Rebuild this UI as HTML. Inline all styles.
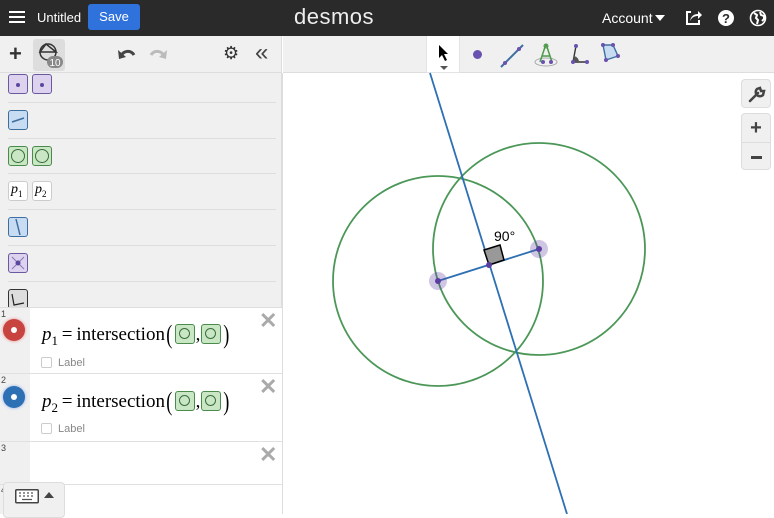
<!DOCTYPE html>
<html><head><meta charset="utf-8"><style>
*{box-sizing:border-box;margin:0;padding:0}
body{width:774px;height:514px;overflow:hidden;font-family:"Liberation Sans",sans-serif;background:#fff;position:relative}
.hdr{position:absolute;left:0;top:0;width:774px;height:36px;background:#2a2a2a;color:#fff}
.abs{position:absolute}
.tb{position:absolute;top:36px;height:37px;background:#f0f0f0;border-bottom:1px solid #ddd}
.row{position:absolute;left:8px;width:268px;border-bottom:1px solid #ddd}
.ic{position:absolute;width:20px;height:20px;border-radius:3px;border:1.5px solid}
.pur{background:#ddd3ee;border-color:#6a58a0}
.blu{background:#c7dcf2;border-color:#3d6ea0}
.grn{background:#c9e7c5;border-color:#4a8a4a}
.wht{background:#fff;border-color:#ccc;border-width:1px}
.expr{position:absolute;left:0;width:282px;background:#fff;border-bottom:1px solid #e0e0e0}
.num{position:absolute;left:1px;font-size:9px;color:#444}
.gut{position:absolute;left:0;top:0;width:30px;height:100%;background:#f0f0f0}
.math{position:absolute;left:42px;font-family:"Liberation Serif",serif;font-size:19px;color:#000;white-space:nowrap}
.mini{display:inline-block;width:20px;height:20px;border:1.5px solid #4a8a4a;background:#c9e7c5;border-radius:3px;vertical-align:-4px;position:relative;margin:0 1px}
.mini:after{content:"";position:absolute;left:3px;top:3px;width:11px;height:11px;border:1.3px solid #3b6e3b;border-radius:50%;box-sizing:border-box}
.par{font-size:26px;vertical-align:-3px;transform:scaleX(0.7);display:inline-block}
.x{position:absolute;left:259px;font-size:22px;color:#aaa;font-weight:bold}
.lbl{position:absolute;left:41px;font-size:11px;color:#888}
.lbl span{display:inline-block;width:11px;height:11px;border:1px solid #ccc;border-radius:2px;vertical-align:-2px;margin-right:6px}
</style></head><body>
<div class="hdr">
 <div class="abs" style="left:9px;top:11px;width:16px;height:2px;background:#fff;box-shadow:0 5px 0 #fff,0 10px 0 #fff"></div>
 <div class="abs" style="left:37px;top:10px;font-size:13px">Untitled</div>
 <div class="abs" style="left:88px;top:4px;width:52px;height:26px;background:#2f72dc;border-radius:3px;font-size:13px;line-height:26px;text-align:center">Save</div>
 <div class="abs" style="left:294px;top:4px;font-size:22px;letter-spacing:0.5px;color:#eee">desmos</div>
 <div class="abs" style="left:602px;top:10px;font-size:14px">Account</div>
 <div class="abs" style="left:655px;top:15px;border:5px solid transparent;border-top:6px solid #fff"></div>
 <svg class="abs" style="left:684px;top:9px" width="18" height="18"><path d="M7 3H3v12h12v-4" stroke="#fff" stroke-width="2" fill="none"/><path d="M6 12c1-5 4-7 8-7V2l4 4-4 4V7c-3 0-6 1-8 5z" fill="#fff"/></svg>
 <svg class="abs" style="left:717px;top:9px" width="18" height="18"><circle cx="9" cy="9" r="8" fill="#fff"/><text x="9" y="14" font-size="13" font-weight="bold" text-anchor="middle" fill="#2a2a2a" font-family="Liberation Sans">?</text></svg>
 <svg class="abs" style="left:749px;top:9px" width="18" height="18"><circle cx="9" cy="9" r="7.5" stroke="#fff" stroke-width="1.6" fill="none"/><path d="M5 4l3 2-1 3 2 2-1 4M11 3l1 3 3 1 0 3-2 2" stroke="#fff" stroke-width="2" fill="none"/></svg>
</div>
<div class="tb" style="left:0;width:282px;border-right:1px solid #ddd">
 <div class="abs" style="left:9px;top:8px;font-size:22px;font-weight:bold;color:#333;line-height:20px">+</div>
 <div class="abs" style="left:33px;top:3px;width:32px;height:32px;background:#ddd;border-radius:3px"></div>
 <svg class="abs" style="left:37px;top:5px" width="26" height="28"><circle cx="11" cy="11" r="8" stroke="#333" stroke-width="1.5" fill="none"/><path d="M3 11L9 3L19 11Z" stroke="#333" stroke-width="1.5" fill="none"/><rect x="10" y="15" width="16" height="12" rx="6" fill="#888"/><text x="18" y="25" font-size="10" fill="#fff" text-anchor="middle" font-family="Liberation Sans">10</text></svg>
 <svg class="abs" style="left:117px;top:10px" width="20" height="16"><path d="M4 10C7 4 14 4 17 9" stroke="#444" stroke-width="3" fill="none"/><path d="M1 4L2 13L9 11Z" fill="#444"/></svg>
 <svg class="abs" style="left:148px;top:10px" width="20" height="16"><path d="M16 10C13 4 6 4 3 9" stroke="#bbb" stroke-width="3" fill="none"/><path d="M19 4L18 13L11 11Z" fill="#bbb"/></svg>
 <div class="abs" style="left:223px;top:7px;font-size:18px;color:#333">⚙</div>
 <div class="abs" style="left:255px;top:3px;font-size:24px;color:#444;letter-spacing:-4px">«</div>
</div>
<div class="tb" style="left:283px;width:491px">
 <div class="abs" style="left:143px;top:0;width:34px;height:37px;background:#fff;border:1px solid #e4e4e4;border-top:0"></div>
 <svg class="abs" style="left:155px;top:8px" width="12" height="26"><path d="M1 1L1 14L4 11L7 17L9 16L6 10L10 10Z" fill="#000"/><path d="M2 22L10 22L6 26Z" fill="#555"/></svg>
 <div class="abs" style="left:190px;top:14px;width:9px;height:9px;border-radius:50%;background:#6a52b0"></div>
 <svg class="abs" style="left:215px;top:6px" width="28" height="28"><path d="M3 25L25 3" stroke="#3d6ea0" stroke-width="2"/><circle cx="7" cy="21" r="2" fill="#6a52b0"/><circle cx="21" cy="7" r="2" fill="#6a52b0"/></svg>
 <svg class="abs" style="left:250px;top:4px" width="30" height="30"><ellipse cx="13" cy="22" rx="11" ry="4" stroke="#aaa" fill="none"/><path d="M13 4L7 22M13 4L19 22M9 16L17 16" stroke="#4a9a4a" stroke-width="1.5" fill="none"/><circle cx="13" cy="6" r="2" fill="none" stroke="#4a9a4a"/><circle cx="10" cy="22" r="2" fill="#6a52b0"/><circle cx="18" cy="22" r="2" fill="#6a52b0"/></svg>
 <svg class="abs" style="left:284px;top:5px" width="24" height="28"><path d="M9 5L6 21L20 21" stroke="#333" stroke-width="1.4" fill="none"/><path d="M6 21L7 15A6 6 0 0 1 12 21Z" fill="#555"/><circle cx="9" cy="5" r="2" fill="#6a52b0"/><circle cx="6" cy="21" r="2" fill="#6a52b0"/><circle cx="20" cy="21" r="2" fill="#6a52b0"/></svg>
 <svg class="abs" style="left:317px;top:6px" width="24" height="26"><path d="M3 3L13 3L18 14L6 18Z" fill="#c7dcf2" stroke="#3d6ea0" stroke-width="1.4"/><circle cx="3" cy="3" r="2" fill="#6a52b0"/><circle cx="13" cy="3" r="2" fill="#6a52b0"/><circle cx="18" cy="14" r="2" fill="#6a52b0"/><circle cx="6" cy="18" r="2" fill="#6a52b0"/></svg>
</div>
<div class="abs" style="left:0;top:73px;width:282px;height:234px;background:#f0f0f0;border-right:1px solid #ddd;overflow:hidden">
 <div class="row" style="top:0;height:30px"><div class="ic pur" style="left:0;top:1px"></div><div class="ic pur" style="left:24px;top:1px"></div>
  <div class="abs" style="left:8px;top:10px;width:4px;height:4px;border-radius:50%;background:#5a48a0"></div><div class="abs" style="left:32px;top:10px;width:4px;height:4px;border-radius:50%;background:#5a48a0"></div></div>
 <div class="row" style="top:30px;height:36px"><div class="ic blu" style="left:0;top:7px"></div><svg class="abs" style="left:0;top:7px" width="20" height="20"><path d="M4 12L16 8" stroke="#3d6ea0" stroke-width="1.5"/></svg></div>
 <div class="row" style="top:66px;height:35px"><div class="ic grn" style="left:0;top:7px"></div><div class="ic grn" style="left:24px;top:7px"></div>
  <div class="abs" style="left:3px;top:10px;width:14px;height:14px;border:1.4px solid #3b6e3b;border-radius:50%"></div><div class="abs" style="left:27px;top:10px;width:14px;height:14px;border:1.4px solid #3b6e3b;border-radius:50%"></div></div>
 <div class="row" style="top:101px;height:36px"><div class="ic wht" style="left:0;top:7px;font-family:'Liberation Serif',serif;font-style:italic;font-size:14px;padding-left:2px">p<sub style="font-size:9px;font-style:normal">1</sub></div><div class="ic wht" style="left:24px;top:7px;font-family:'Liberation Serif',serif;font-style:italic;font-size:14px;padding-left:2px">p<sub style="font-size:9px;font-style:normal">2</sub></div></div>
 <div class="row" style="top:137px;height:36px"><div class="ic blu" style="left:0;top:7px"></div><svg class="abs" style="left:0;top:7px" width="20" height="20"><path d="M8 2L12 18" stroke="#3d6ea0" stroke-width="1.5"/></svg></div>
 <div class="row" style="top:173px;height:36px"><div class="ic pur" style="left:0;top:7px"></div><svg class="abs" style="left:0;top:7px" width="20" height="20"><path d="M4 4L16 16M16 4L4 16" stroke="#8877bb" stroke-width="1"/><circle cx="10" cy="10" r="2.5" fill="#5a48a0"/></svg></div>
 <div class="row" style="top:209px;height:40px;border:0"><div class="ic" style="left:0;top:7px;border-color:#333;background:#ddd"></div><svg class="abs" style="left:0;top:7px" width="20" height="20"><path d="M4 5L6 16L16 14" stroke="#222" stroke-width="1.2" fill="none"/></svg></div>
</div>
<div class="expr" style="top:307px;height:67px;border-top:1px solid #ddd"><div class="gut"></div><div class="num" style="top:1px">1</div>
 <div class="abs" style="left:3px;top:11px;width:22px;height:22px;border-radius:50%;background:#c74440;box-shadow:0 0 3px #e88"></div><div class="abs" style="left:11px;top:19px;width:6px;height:6px;border-radius:50%;background:#fff"></div>
 <div class="math" style="top:12px"><i>p</i><sub style="font-size:13px">1</sub>&thinsp;=&thinsp;intersection<span class="par">(</span><span class="mini"></span>,<span class="mini"></span><span class="par">)</span></div>
 <div class="x" style="top:0">✕</div><div class="lbl" style="top:49px"><span></span>Label</div></div>
<div class="expr" style="top:374px;height:68px"><div class="gut"></div><div class="num" style="top:1px">2</div>
 <div class="abs" style="left:3px;top:12px;width:22px;height:22px;border-radius:50%;background:#2d70b3;box-shadow:0 0 3px #8ae"></div><div class="abs" style="left:11px;top:20px;width:6px;height:6px;border-radius:50%;background:#fff"></div>
 <div class="math" style="top:13px"><i>p</i><sub style="font-size:13px">2</sub>&thinsp;=&thinsp;intersection<span class="par">(</span><span class="mini"></span>,<span class="mini"></span><span class="par">)</span></div>
 <div class="x" style="top:0">✕</div><div class="lbl" style="top:49px"><span></span>Label</div></div>
<div class="expr" style="top:442px;height:43px"><div class="gut"></div><div class="num" style="top:1px">3</div><div class="x" style="top:0">✕</div></div>
<div class="expr" style="top:485px;height:29px;border:0"><div class="gut"></div><div class="num" style="top:0">4</div></div>
<div class="abs" style="left:282px;top:73px;width:1px;height:441px;background:#ddd"></div>
<div class="abs" style="left:3px;top:482px;width:62px;height:36px;background:#f0f0f0;border:1px solid #ddd;border-radius:4px">
 <svg class="abs" style="left:11px;top:6px" width="24" height="15"><rect x="0.75" y="0.75" width="22.5" height="13" rx="1" fill="#fff" stroke="#444" stroke-width="1.5"/><path d="M4 4h2M8 4h2M12 4h2M16 4h2M4 7h2M8 7h2M12 7h2M16 7h2M7 10.5h10" stroke="#555" stroke-width="1.3"/></svg>
 <div class="abs" style="left:40px;top:9px;border:5px solid transparent;border-bottom:6px solid #444;border-top:0"></div></div>
<svg class="abs" style="left:0;top:0" width="774" height="514">
 <g fill="none" stroke="#388c46" stroke-width="1.8" opacity="0.9">
  <circle cx="438" cy="281" r="105"/><circle cx="539" cy="249" r="106"/></g>
 <line x1="430" y1="73" x2="567" y2="514" stroke="#2d70b3" stroke-width="1.8"/>
 <line x1="438" y1="281" x2="539" y2="249" stroke="#2d70b3" stroke-width="1.8"/>
 <path d="M489 265L504 260L500 245L484 250Z" fill="#999" stroke="#000" stroke-width="1.5"/>
 <circle cx="438" cy="281" r="9" fill="#6042a6" opacity="0.3"/><circle cx="539" cy="249" r="9" fill="#6042a6" opacity="0.3"/>
 <circle cx="438" cy="281" r="3" fill="#5a3d9e"/><circle cx="539" cy="249" r="3" fill="#5a3d9e"/><circle cx="489" cy="265" r="3" fill="#5a3d9e"/>
 <text x="494" y="241" font-size="14" font-family="Liberation Sans">90°</text>
</svg>
<div class="abs" style="left:741px;top:79px;width:30px;height:29px;background:#f0f0f0;border:1px solid #ddd;border-radius:4px"><svg width="30" height="29"><path d="M8 21L16 13M15 9A4 4 0 0 0 21 15L22 11L19 11L18 8Z" stroke="#444" stroke-width="2.5" fill="none" stroke-linecap="round"/></svg></div>
<div class="abs" style="left:741px;top:113px;width:30px;height:57px;background:#f0f0f0;border:1px solid #ddd;border-radius:4px">
 <div class="abs" style="left:0;top:0;width:28px;height:28px;text-align:center;font-size:20px;font-weight:bold;color:#444;line-height:28px">+</div>
 <div class="abs" style="left:0;top:28px;width:28px;height:1px;background:#ddd"></div>
 <div class="abs" style="left:9px;top:42px;width:11px;height:2.5px;background:#444"></div></div>
</body></html>
